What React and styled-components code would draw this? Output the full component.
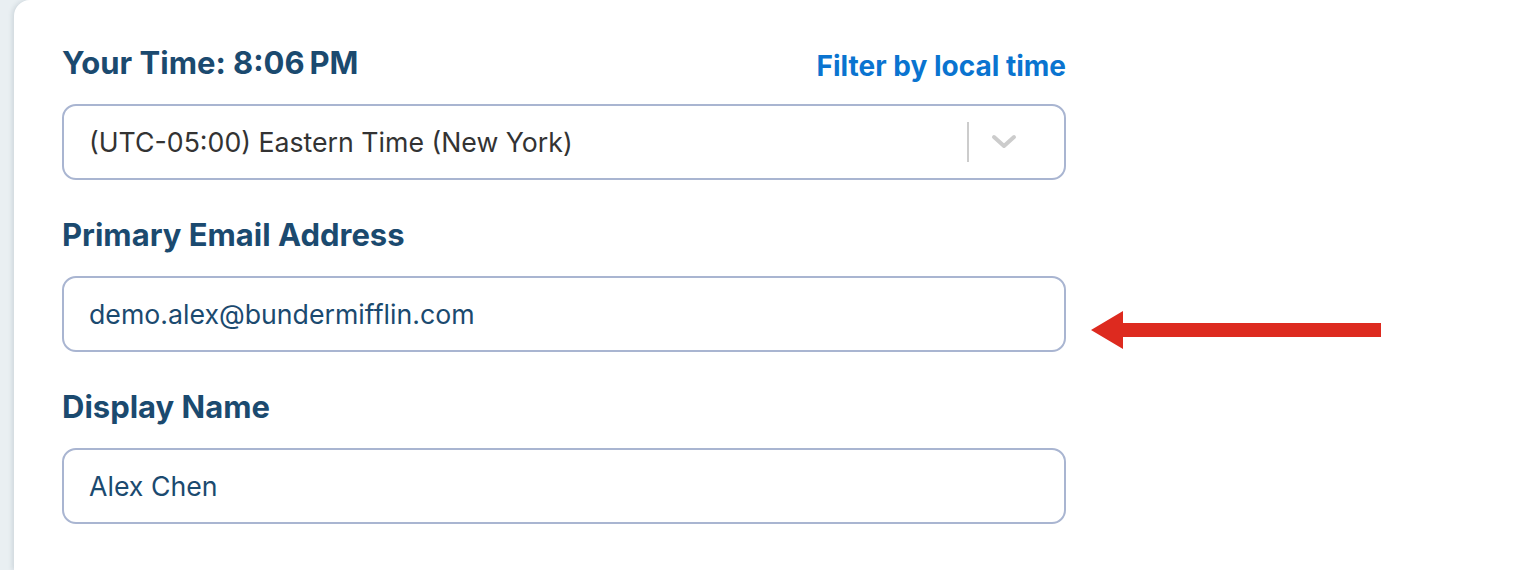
import React from "react";
import styled, { createGlobalStyle } from "styled-components";

const Global = createGlobalStyle`
  html, body { margin: 0; padding: 0; background: #e9eff2; }
  body { font-family: Inter, "Noto Sans", sans-serif; -webkit-font-smoothing: antialiased; }
  * { box-sizing: border-box; }
`;

const Page = styled.div`
  width: 1520px;
  height: 570px;
  overflow: hidden;
  padding-left: 14px;
  background: #e9eff2;
`;

const Card = styled.div`
  position: relative;
  height: 100%;
  background: #ffffff;
  border-top-left-radius: 16px;
  box-shadow: -2px 0 4px rgba(90, 110, 125, 0.18);
  padding: 45px 0 0 48px;
`;

const Form = styled.div`
  width: 1004px;
  display: flex;
  flex-direction: column;
`;

const Field = styled.div`
  display: flex;
  flex-direction: column;
  margin-bottom: 37px;
`;

const LabelRow = styled.div`
  display: flex;
  justify-content: space-between;
  align-items: flex-end;
  height: 36px;
  margin-bottom: 23px;
`;

const Label = styled.div`
  font-size: 31px;
  line-height: 36px;
  font-weight: 700;
  color: #1b4a6f;
`;

const Link = styled.a`
  font-size: 28px;
  line-height: 30px;
  font-weight: 700;
  color: #0a74d0;
  text-decoration: none;
  cursor: pointer;
`;

const Box = styled.div`
  height: 76px;
  border: 2px solid #a9b5d1;
  border-radius: 14px;
  display: flex;
  align-items: center;
  padding: 0 25px 0 25px;
  background: #fff;
`;

const Value = styled.div`
  flex: 1;
  font-size: 26.7px;
  color: ${(p) => p.$color || "#1b4a6f"};
  white-space: nowrap;
`;

const Separator = styled.div`
  width: 2px;
  height: 40px;
  background: #cccccc;
`;

const Chevron = styled.div`
  width: 70px;
  display: flex;
  justify-content: center;
  align-items: center;
`;

const Arrow = styled.svg`
  position: absolute;
  left: 1076px;
  top: 310px;
`;

export default function App() {
  return (
    <>
      <Global />
      <Page>
        <Card>
          <Form>
            <Field>
              <LabelRow>
                <Label>Your Time: 8:06&#8201;PM</Label>
                <Link>Filter by local time</Link>
              </LabelRow>
              <Box>
                <Value $color="#333333">(UTC-05:00) Eastern Time (New York)</Value>
                <Separator />
                <Chevron>
                  <svg width="28" height="18" viewBox="0 0 28 18">
                    <path d="M4 4 L14 13 L24 4" fill="none" stroke="#cccccc" strokeWidth="4" strokeLinecap="round" strokeLinejoin="round" />
                  </svg>
                </Chevron>
              </Box>
            </Field>
            <Field>
              <LabelRow>
                <Label>Primary Email Address</Label>
              </LabelRow>
              <Box>
                <Value>demo.alex@bundermifflin.com</Value>
              </Box>
            </Field>
            <Field>
              <LabelRow>
                <Label>Display Name</Label>
              </LabelRow>
              <Box>
                <Value>Alex Chen</Value>
              </Box>
            </Field>
          </Form>
          <Arrow width="300" height="40" viewBox="0 0 300 40">
            <polygon points="1,20 33,1 33,13 291,13 291,27 33,27 33,39" fill="#dd2a1f" />
          </Arrow>
        </Card>
      </Page>
    </>
  );
}
